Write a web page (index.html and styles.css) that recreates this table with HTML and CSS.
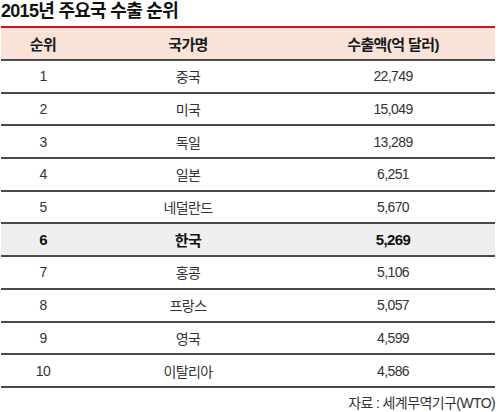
FILE: index.html
```html
<!DOCTYPE html>
<html lang="ko">
<head>
    <meta charset="UTF-8">
    <title>2015년 주요국 수출 순위</title>
    <link rel="stylesheet" href="styles.css">
</head>
<body>
    <div class="board">
        <div class="title">2015년 주요국 수출 순위</div>
        <div class="rank">
            <div class="row head">
                <div class="cell">순위</div>
                <div class="cell">국가명</div>
                <div class="cell">수출액(억 달러)</div>
            </div>
            <div class="row"><div class="cell">1</div><div class="cell">중국</div><div class="cell">22,749</div></div>
            <div class="row"><div class="cell">2</div><div class="cell">미국</div><div class="cell">15,049</div></div>
            <div class="row"><div class="cell">3</div><div class="cell">독일</div><div class="cell">13,289</div></div>
            <div class="row"><div class="cell">4</div><div class="cell">일본</div><div class="cell">6,251</div></div>
            <div class="row"><div class="cell">5</div><div class="cell">네덜란드</div><div class="cell">5,670</div></div>
            <div class="row korea"><div class="cell">6</div><div class="cell">한국</div><div class="cell">5,269</div></div>
            <div class="row"><div class="cell">7</div><div class="cell">홍콩</div><div class="cell">5,106</div></div>
            <div class="row"><div class="cell">8</div><div class="cell">프랑스</div><div class="cell">5,057</div></div>
            <div class="row"><div class="cell">9</div><div class="cell">영국</div><div class="cell">4,599</div></div>
            <div class="row"><div class="cell">10</div><div class="cell">이탈리아</div><div class="cell">4,586</div></div>
        </div>
        <div class="source">자료 : 세계무역기구(WTO)</div>
    </div>
</body>
</html>
```

FILE: styles.css
```css
body{
    margin: 0;
    background-color: #fff;
    font-family: "Liberation Sans", "Noto Sans CJK KR", sans-serif;
    color: #333;
}
.board{
    width: 494px;
    margin-left: 1px;
}
.title{
    height: 25.5px;
    font-size: 18px;
    font-weight: bold;
    line-height: 23px;
    color: #111;
    letter-spacing: -0.7px;
}
.rank{
    border-top: 2px solid #d0121b;
}
.row{
    display: grid;
    grid-template-columns: 84px 206px 1fr;
    height: 32.7px;
    box-sizing: border-box;
    border-bottom: 2px solid #4a4a4a;
    align-items: center;
    font-size: 14px;
}
.cell{
    text-align: center;
    letter-spacing: -0.6px;
}
.head{
    height: 33.5px;
    background-color: #f9e3d8;
    font-size: 15px;
    font-weight: bold;
    color: #1a1a1a;
}
.korea{
    background-color: #efefef;
    font-weight: bold;
    font-size: 15px;
    color: #111;
}
.source{
    text-align: right;
    font-size: 14px;
    margin-top: 4px;
    letter-spacing: -0.6px;
    color: #333;
}
```
